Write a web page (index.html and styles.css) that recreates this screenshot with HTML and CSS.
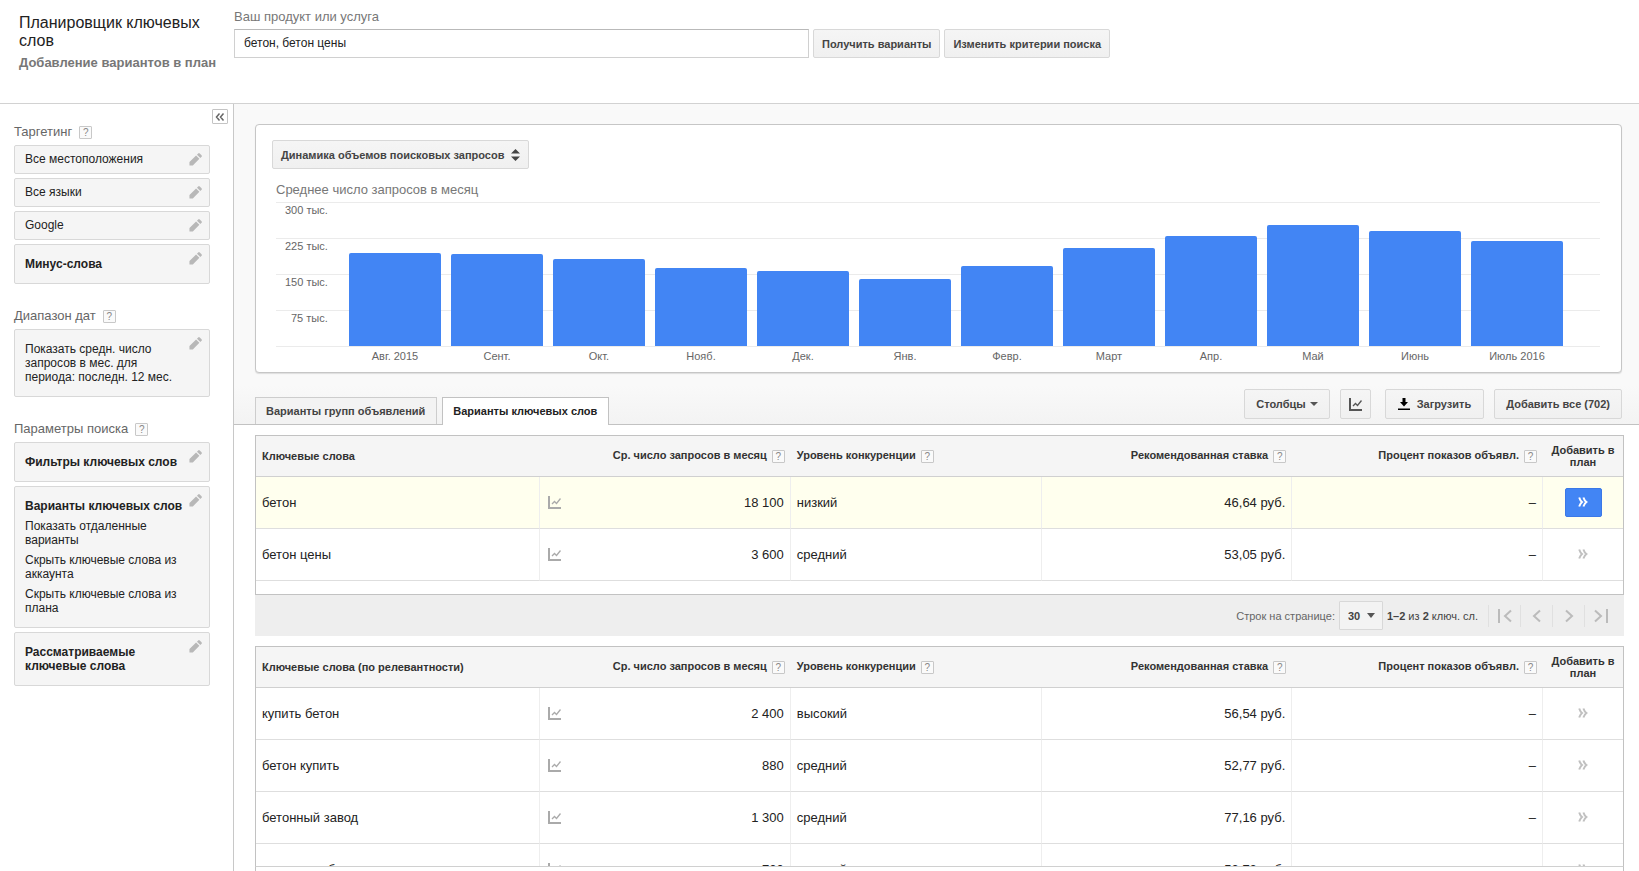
FILE: index.html
```html
<!DOCTYPE html>
<html lang="ru">
<head>
<meta charset="utf-8">
<title>Планировщик ключевых слов</title>
<link rel="stylesheet" href="styles.css">
</head>
<body>
<svg class="defs" width="0" height="0" aria-hidden="true">
  <symbol id="pencil" viewBox="0 0 14 14"><path d="M.5 9.800 7.600 2.700 11.200 6.300 4.100 13.400H.5zM8.600 1.800 9.900.5a1.200 1.200 0 0 1 1.700 0l1.900 1.900a1.200 1.200 0 0 1 0 1.700L12.200 5.400z"/></symbol>
  <symbol id="graph" viewBox="0 0 13 13"><path d="M1 0V12H13" fill="none" stroke="currentColor" stroke-width="2"/><path d="M4 8 6.500 5.500 8.500 7.500 12.500 2.500" fill="none" stroke="currentColor" stroke-width="1.300"/></symbol>
  <symbol id="raquo" viewBox="0 0 10 10"><path d="M1.200.5Q2.200 3.500 4 5 2.200 6.500 1.200 9.500M5.400.5Q6.400 3.500 8.400 5 6.400 6.500 5.400 9.500" fill="none" stroke="currentColor" stroke-width="2"/></symbol>
  <symbol id="laquo" viewBox="0 0 10 10"><path d="M4.500 1.500 1.500 5 4.500 8.500M8.500 1.500 5.500 5 8.500 8.500" fill="none" stroke="currentColor" stroke-width="1.500"/></symbol>
</svg>
<header class="header">
  <div class="heading">
    <h1>Планировщик ключевых слов</h1>
    <p>Добавление вариантов в план</p>
  </div>
  <form class="search">
    <label for="product">Ваш продукт или услуга</label>
    <div class="search-row">
      <input id="product" type="text" value="бетон, бетон цены">
      <button class="btn" type="button">Получить варианты</button>
      <button class="btn" type="button">Изменить критерии поиска</button>
    </div>
  </form>
</header>
<div class="body">
  <aside class="sidebar">
    <button class="collapse" type="button" aria-label="Свернуть"><svg width="10" height="10"><use href="#laquo"/></svg></button>
    <section>
      <h2>Таргетинг <button class="help" type="button">?</button></h2>
      <div class="box small"><span>Все местоположения</span><svg class="pencil"><use href="#pencil"/></svg></div>
      <div class="box small"><span>Все языки</span><svg class="pencil"><use href="#pencil"/></svg></div>
      <div class="box small"><span>Google</span><svg class="pencil"><use href="#pencil"/></svg></div>
      <div class="box"><b>Минус-слова</b><svg class="pencil"><use href="#pencil"/></svg></div>
    </section>
    <section>
      <h2>Диапазон дат <button class="help" type="button">?</button></h2>
      <div class="box"><span>Показать средн. число запросов в мес. для периода: последн. 12 мес.</span><svg class="pencil"><use href="#pencil"/></svg></div>
    </section>
    <section>
      <h2>Параметры поиска <button class="help" type="button">?</button></h2>
      <div class="box"><b>Фильтры ключевых слов</b><svg class="pencil"><use href="#pencil"/></svg></div>
      <div class="box"><b>Варианты ключевых слов</b><p>Показать отдаленные варианты</p><p>Скрыть ключевые слова из аккаунта</p><p>Скрыть ключевые слова из плана</p><svg class="pencil"><use href="#pencil"/></svg></div>
      <div class="box"><b>Рассматриваемые ключевые слова</b><svg class="pencil"><use href="#pencil"/></svg></div>
    </section>
  </aside>
  <main class="main">
    <div class="top">
      <section class="card">
        <button class="btn metric" type="button">Динамика объемов поисковых запросов
          <svg width="9" height="12" viewBox="0 0 9 12"><path d="M0 4.500 4.500 0 9 4.500zM0 7.500 4.500 12 9 7.500z" fill="#444"/></svg>
        </button>
        <h3>Среднее число запросов в месяц</h3>
        <div class="chart">
          <div class="grid"><span>300 тыс.</span><span>225 тыс.</span><span>150 тыс.</span><span>75 тыс.</span></div>
          <div class="bars">
            <i style="height:93px"></i><i style="height:92px"></i><i style="height:87px"></i><i style="height:78px"></i><i style="height:75px"></i><i style="height:67px"></i><i style="height:80px"></i><i style="height:98px"></i><i style="height:110px"></i><i style="height:121px"></i><i style="height:115px"></i><i style="height:105px"></i>
          </div>
        </div>
        <div class="months"><span>Авг. 2015</span><span>Сент.</span><span>Окт.</span><span>Нояб.</span><span>Дек.</span><span>Янв.</span><span>Февр.</span><span>Март</span><span>Апр.</span><span>Май</span><span>Июнь</span><span>Июль 2016</span></div>
      </section>
      <div class="toolbar">
        <nav class="tabs">
          <a class="tab" href="#groups">Варианты групп объявлений</a>
          <a class="tab active" href="#keywords">Варианты ключевых слов</a>
        </nav>
        <div class="actions">
          <button class="btn tall columns" type="button">Столбцы <svg width="8" height="4"><path d="M0 0H8L4 4z" fill="#555"/></svg></button>
          <button class="btn tall icon" type="button" aria-label="График"><svg width="13" height="13"><use href="#graph"/></svg></button>
          <button class="btn tall load" type="button"><svg width="12" height="12" viewBox="0 0 12 12"><path d="M4.500 0h3v4H10L6 8.500 2 4h2.500zM0 10.500H12V12H0z" fill="#000"/></svg> Загрузить</button>
          <button class="btn tall" type="button">Добавить все (702)</button>
        </div>
      </div>
    </div>
    <div class="results">
      <div class="frame first">
        <table>
          <colgroup><col class="c1"><col class="c2"><col class="c2"><col class="c2"><col class="c2"><col class="c6"></colgroup>
          <thead><tr><th>Ключевые слова</th><th class="r">Ср. число запросов в месяц <button class="help" type="button">?</button></th><th>Уровень конкуренции <button class="help" type="button">?</button></th><th class="r">Рекомендованная ставка <button class="help" type="button">?</button></th><th class="r">Процент показов объявл. <button class="help" type="button">?</button></th><th class="c">Добавить в план</th></tr></thead>
          <tbody>
            <tr class="hl"><td>бетон</td><td><div class="num"><svg class="graph"><use href="#graph"/></svg>18 100</div></td><td>низкий</td><td class="r">46,64 руб.</td><td class="r">–</td><td class="c"><button class="add primary" type="button" aria-label="Добавить"><svg width="10" height="10"><use href="#raquo"/></svg></button></td></tr>
            <tr><td>бетон цены</td><td><div class="num"><svg class="graph"><use href="#graph"/></svg>3 600</div></td><td>средний</td><td class="r">53,05 руб.</td><td class="r">–</td><td class="c"><button class="add" type="button" aria-label="Добавить"><svg width="10" height="10"><use href="#raquo"/></svg></button></td></tr>
          </tbody>
        </table>
      </div>
      <div class="pager">
        <label for="rows">Строк на странице:</label>
        <div class="select"><select id="rows"><option>30</option></select><svg width="8" height="5"><path d="M0 0H8L4 5z" fill="#555"/></svg></div>
        <span class="range"><b>1–2</b> из <b>2</b> ключ. сл.</span>
        <div class="pages">
          <button type="button" aria-label="Первая"><svg width="14" height="14" viewBox="0 0 14 14"><path d="M1 0V14M13 1.500 7 7 13 12.500"/></svg></button>
          <button type="button" aria-label="Назад"><svg width="14" height="14" viewBox="0 0 14 14"><path d="M10 1.500 4 7 10 12.500"/></svg></button>
          <button type="button" aria-label="Вперед"><svg width="14" height="14" viewBox="0 0 14 14"><path d="M4 1.500 10 7 4 12.500"/></svg></button>
          <button type="button" aria-label="Последняя"><svg width="14" height="14" viewBox="0 0 14 14"><path d="M13 0V14M1 1.500 7 7 1 12.500"/></svg></button>
        </div>
      </div>
      <div class="frame">
        <table>
          <colgroup><col class="c1"><col class="c2"><col class="c2"><col class="c2"><col class="c2"><col class="c6"></colgroup>
          <thead><tr><th>Ключевые слова (по релевантности)</th><th class="r">Ср. число запросов в месяц <button class="help" type="button">?</button></th><th>Уровень конкуренции <button class="help" type="button">?</button></th><th class="r">Рекомендованная ставка <button class="help" type="button">?</button></th><th class="r">Процент показов объявл. <button class="help" type="button">?</button></th><th class="c">Добавить в план</th></tr></thead>
          <tbody>
            <tr><td>купить бетон</td><td><div class="num"><svg class="graph"><use href="#graph"/></svg>2 400</div></td><td>высокий</td><td class="r">56,54 руб.</td><td class="r">–</td><td class="c"><button class="add" type="button" aria-label="Добавить"><svg width="10" height="10"><use href="#raquo"/></svg></button></td></tr>
            <tr><td>бетон купить</td><td><div class="num"><svg class="graph"><use href="#graph"/></svg>880</div></td><td>средний</td><td class="r">52,77 руб.</td><td class="r">–</td><td class="c"><button class="add" type="button" aria-label="Добавить"><svg width="10" height="10"><use href="#raquo"/></svg></button></td></tr>
            <tr><td>бетонный завод</td><td><div class="num"><svg class="graph"><use href="#graph"/></svg>1 300</div></td><td>средний</td><td class="r">77,16 руб.</td><td class="r">–</td><td class="c"><button class="add" type="button" aria-label="Добавить"><svg width="10" height="10"><use href="#raquo"/></svg></button></td></tr>
            <tr><td>стоимость бетона</td><td><div class="num"><svg class="graph"><use href="#graph"/></svg>720</div></td><td>средний</td><td class="r">53,72 руб.</td><td class="r">–</td><td class="c"><button class="add" type="button" aria-label="Добавить"><svg width="10" height="10"><use href="#raquo"/></svg></button></td></tr>
          </tbody>
        </table>
      </div>
      <div class="scroller"></div>
    </div>
  </main>
</div>
</body>
</html>
```
FILE: styles.css
```css
* { box-sizing: border-box; }
html, body { height: 100%; }
body {
  margin: 0;
  display: flex;
  flex-direction: column;
  overflow: hidden;
  background: #fff;
  color: #222;
  font: 12px/14px "Liberation Sans", Arial, sans-serif;
}
h1, h2, h3, p { margin: 0; font-weight: normal; }
button, input, select { font: inherit; color: inherit; margin: 0; }
button { padding: 0; cursor: pointer; }
svg { display: block; flex: none; }
.defs { position: absolute; }

.header {
  flex: none;
  display: flex;
  min-height: 104px;
  border-bottom: 1px solid #d2d2d2;
}
.heading { width: 234px; padding: 14px 16px 0 19px; }
.heading h1 { font-size: 16px; line-height: 18px; }
.heading p {
  margin-top: 4px;
  font-size: 13px;
  line-height: 18px;
  font-weight: bold;
  color: #777;
  white-space: nowrap;
}
.search { flex: 1; padding-top: 8px; }
.search label { display: block; font-size: 13px; line-height: 17px; color: #777; }
.search-row { display: flex; gap: 4px; margin-top: 4px; }
.search-row input {
  width: 575px;
  height: 29px;
  padding: 0 9px 2px;
  border: 1px solid #d0d0d0;
  border-top-color: #b9b9b9;
  background: #fff;
}
.btn {
  display: flex;
  align-items: center;
  height: 29px;
  padding: 0 8px;
  border: 1px solid #d8d8d8;
  border-radius: 2px;
  background: linear-gradient(#f5f5f5, #f0f0f0);
  color: #444;
  font-size: 11px;
  font-weight: bold;
  white-space: nowrap;
}

.body { flex: 1; display: flex; min-height: 0; }
.sidebar {
  position: relative;
  flex: none;
  width: 234px;
  padding: 20px 23px 0 14px;
  border-right: 1px solid #c8c8c8;
}
.collapse {
  position: absolute;
  top: 5px;
  right: 5px;
  display: flex;
  align-items: center;
  justify-content: center;
  width: 16px;
  height: 15px;
  border: 1px solid #c4c4c4;
  border-radius: 1px;
  background: #fff;
  color: #666;
}
.sidebar section { display: flex; flex-direction: column; gap: 4px; margin-bottom: 24px; }
.sidebar h2 {
  display: flex;
  align-items: center;
  gap: 7px;
  margin-bottom: 1px;
  font-size: 13px;
  line-height: 16px;
  color: #666;
}
.help {
  display: inline-flex;
  align-items: center;
  justify-content: center;
  width: 13px;
  height: 13px;
  border: 1px solid #c8c8c8;
  border-radius: 1px;
  background: #fafafa;
  color: #888;
  font-size: 10px;
  line-height: 11px;
  font-weight: normal;
}
.box {
  position: relative;
  padding: 12px 26px 12px 10px;
  border: 1px solid #d8d8d8;
  border-radius: 2px;
  background: #f5f5f5;
}
.box.small { padding: 6px 26px 7px 10px; }
.box b { display: block; }
.box p { margin-top: 6px; }
.pencil {
  position: absolute;
  top: 7px;
  right: 7px;
  width: 13px;
  height: 13px;
  fill: #b8b8b8;
}

.main { flex: 1; min-width: 0; display: flex; flex-direction: column; }
.top {
  flex: none;
  padding: 20px 17px 0 21px;
  background: linear-gradient(#f9f9f9 88%, #f3f3f3);
  border-bottom: 1px solid #c2c2c2;
}
.card {
  padding: 15px 21px 8px 20px;
  border: 1px solid #c6c6c6;
  border-radius: 4px;
  background: #fff;
  box-shadow: 0 1px 1px #ddd;
}
.metric { gap: 7px; margin-left: -4px; }
.card h3 { margin-top: 12px; font-size: 13px; line-height: 17px; color: #777; }
.chart { position: relative; margin-top: 4px; height: 145px; }
.grid {
  display: grid;
  grid-auto-rows: 36px;
  border-bottom: 1px solid #ebebeb;
}
.grid span {
  padding-left: 9px;
  border-top: 1px solid #ebebeb;
  font-size: 11px;
  line-height: 15px;
  color: #666;
}
.grid span:last-child { padding-left: 15px; }
.bars {
  position: absolute;
  inset: 0 37px 1px 73px;
  display: grid;
  grid-template-columns: repeat(12, 1fr);
  gap: 10px;
  align-items: end;
}
.bars i { border-radius: 2px 2px 0 0; background: #4285f4; }
.months {
  display: grid;
  grid-template-columns: repeat(12, 1fr);
  gap: 10px;
  padding: 2px 37px 1px 73px;
  font-size: 11px;
  color: #666;
  text-align: center;
}

.toolbar { display: flex; justify-content: space-between; margin-top: 16px; }
.tabs { display: flex; gap: 5px; align-items: flex-end; margin-bottom: -1px; }
.tab {
  padding: 6px 11px 6px 10px;
  height: 27px;
  border: 1px solid #cdcdcd;
  border-bottom: 0;
  margin-bottom: 1px;
  background: #f3f3f3;
  color: #444;
  font-size: 11px;
  font-weight: bold;
  text-decoration: none;
}
.tab.active { height: 28px; margin-bottom: 0; background: #fff; color: #222; border-color: #c2c2c2; }
.actions { display: flex; gap: 10px; padding-bottom: 5px; }
.tall { height: 30px; padding: 0 11px; }
.columns { gap: 4px; }
.icon { padding: 0 8px; color: #555; margin-right: 4px; }
.load { gap: 7px; padding: 0 12px; }

.results {
  position: relative;
  flex: 1;
  min-height: 0;
  overflow: hidden;
  padding: 10px 15px 0 21px;
}
.frame { border: 1px solid #c2c2c2; }
.frame.first { padding-bottom: 13px; }
table { width: 100%; border-collapse: separate; border-spacing: 0; table-layout: fixed; }
.c1 { width: 284px; }
.c6 { width: 80px; }
th {
  height: 41px;
  padding: 0 6px;
  border-bottom: 1px solid #d0d0d0;
  background: #f5f5f5;
  color: #333;
  font-size: 11px;
  line-height: 12px;
  text-align: left;
  white-space: nowrap;
}
th .help { margin-left: 2px; vertical-align: middle; }
td {
  height: 52px;
  padding: 0 6px;
  border-bottom: 1px solid #dedede;
  border-right: 1px solid #eee;
  font-size: 13px;
}
td:last-child { border-right: 0; }
.r { text-align: right; }
.c { text-align: center; white-space: normal; }
.hl { background: #ffffee; }
.num { display: flex; align-items: center; justify-content: space-between; padding-left: 2px; }
.graph { width: 13px; height: 13px; color: #aaa; }
.add {
  display: inline-flex;
  align-items: center;
  justify-content: center;
  width: 37px;
  height: 29px;
  padding-bottom: 2px;
  border: 1px solid transparent;
  border-radius: 2px;
  background: none;
  color: #c0c0c0;
  vertical-align: middle;
}
.add.primary { border-color: #3b78e7; background: #4285f4; color: #fff; }

.pager {
  display: flex;
  align-items: center;
  justify-content: flex-end;
  gap: 4px;
  height: 41px;
  margin-bottom: 10px;
  background: #eee;
  color: #666;
  font-size: 11px;
}
.select { position: relative; display: flex; align-items: center; }
.select select {
  appearance: none;
  width: 44px;
  height: 29px;
  padding: 0 8px;
  border: 1px solid #d8d8d8;
  border-radius: 1px;
  background: #f3f3f3;
  color: #444;
  font-weight: bold;
}
.select svg { position: absolute; right: 8px; pointer-events: none; }
.range { color: #444; }
.pages { display: flex; margin: 0 8px 0 6px; }
.pages button {
  display: flex;
  align-items: center;
  justify-content: center;
  width: 32px;
  height: 22px;
  border: 0;
  border-left: 1px solid #e0e0e0;
  background: none;
}
.pages path { fill: none; stroke: #bbb; stroke-width: 2; }

.scroller {
  position: absolute;
  left: 21px;
  right: 15px;
  bottom: 0;
  height: 5px;
  border: 1px solid #c2c2c2;
  border-width: 1px 1px 0;
  border-top-color: #d0d0d0;
  background: #fff;
}
```
